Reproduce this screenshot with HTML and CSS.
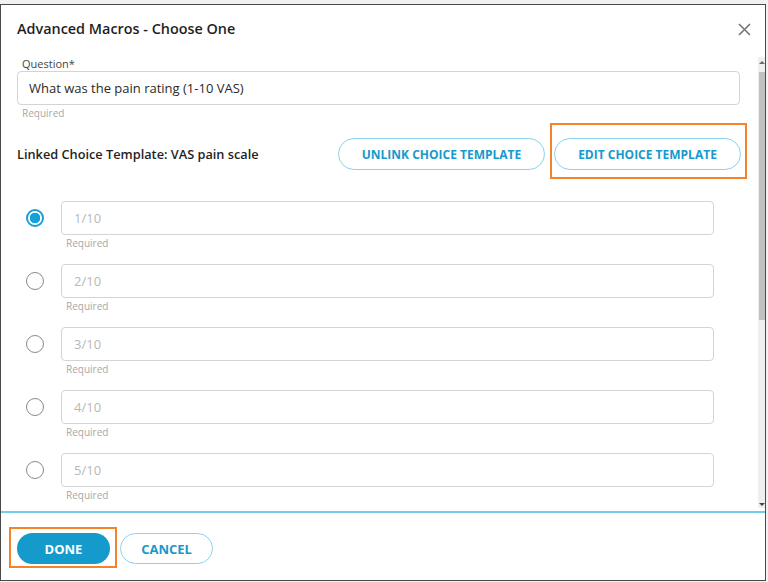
FILE: index.html
```html
<!DOCTYPE html>
<html lang="en">
<head>
<meta charset="utf-8">
<title>Advanced Macros - Choose One</title>
<link rel="stylesheet" href="styles.css">
</head>
<body>
<div class="dialog">
  <div class="header">
    <h1 class="title">Advanced Macros - Choose One</h1>
    <button class="close" aria-label="Close">
      <svg width="13" height="13" viewBox="0 0 13 13"><path d="M1 1 L12 12 M12 1 L1 12" stroke="#757575" stroke-width="1.6" fill="none"/></svg>
    </button>
  </div>
  <div class="main">
    <div class="content">
      <div class="field">
        <label class="label">Question*</label>
        <div class="input question">What was the pain rating (1-10 VAS)</div>
        <div class="hint">Required</div>
      </div>
      <div class="linked-row">
        <div class="linked-text">Linked Choice Template: VAS pain scale</div>
        <div class="btn-group">
          <button class="btn btn-outline btn-unlink">UNLINK CHOICE TEMPLATE</button>
          <div class="highlight highlight-edit">
            <button class="btn btn-outline btn-edit">EDIT CHOICE TEMPLATE</button>
          </div>
        </div>
      </div>
      <div class="options">
        <div class="option">
          <span class="radio checked"></span>
          <div class="option-field">
            <div class="input placeholder">1/10</div>
            <div class="hint">Required</div>
          </div>
        </div>
        <div class="option">
          <span class="radio"></span>
          <div class="option-field">
            <div class="input placeholder">2/10</div>
            <div class="hint">Required</div>
          </div>
        </div>
        <div class="option">
          <span class="radio"></span>
          <div class="option-field">
            <div class="input placeholder">3/10</div>
            <div class="hint">Required</div>
          </div>
        </div>
        <div class="option">
          <span class="radio"></span>
          <div class="option-field">
            <div class="input placeholder">4/10</div>
            <div class="hint">Required</div>
          </div>
        </div>
        <div class="option">
          <span class="radio"></span>
          <div class="option-field">
            <div class="input placeholder">5/10</div>
            <div class="hint">Required</div>
          </div>
        </div>
        <div class="option">
          <span class="radio"></span>
          <div class="option-field">
            <div class="input placeholder">6/10</div>
            <div class="hint">Required</div>
          </div>
        </div>
      </div>
    </div>
    <div class="scrollbar">
      <span class="arrow-up"></span>
      <span class="thumb"></span>
      <span class="track-fill"></span>
      <span class="arrow-down"></span>
    </div>
  </div>
  <div class="footer">
    <div class="highlight highlight-done">
      <button class="btn btn-primary">DONE</button>
    </div>
    <button class="btn btn-outline btn-cancel">CANCEL</button>
  </div>
</div>
</body>
</html>
```
FILE: styles.css
```css
* { box-sizing: border-box; }
html, body { margin: 0; padding: 0; }
body {
  background: #f1f1f1;
  font-family: "Open Sans", "Noto Sans", "Liberation Sans", sans-serif;
  color: #222;
  height: 582px;
  overflow: hidden;
}
.dialog {
  margin-top: 4px;
  width: 766px;
  height: 577px;
  border: 1px solid #4a4a4a;
  background: #fff;
  display: flex;
  flex-direction: column;
}
.header {
  height: 52px;
  flex: none;
  display: flex;
  align-items: flex-start;
  justify-content: space-between;
  padding: 14px 14px 0 16px;
}
.title {
  margin: 0;
  font-size: 14.4px;
  line-height: 20px;
  font-weight: 600;
  color: #1f1f1f;
}
.close {
  border: 0;
  background: none;
  padding: 0;
  margin-top: 4px;
  width: 13px;
  height: 13px;
  display: block;
}
.close svg { display: block; }
.main {
  flex: 1;
  min-height: 0;
  display: flex;
}
.content {
  flex: 1;
  overflow: hidden;
  padding: 0 18px 0 16px;
}
.label {
  display: block;
  font-size: 11px;
  line-height: 13px;
  margin-bottom: 1px;
  padding-left: 5px;
  color: #444;
}
.input {
  height: 34px;
  border: 1px solid #d4d4d4;
  border-radius: 4px;
  font-size: 13px;
  line-height: 32px;
  padding: 0 11px;
  color: #2a2a2a;
}
.input.placeholder {
  color: #b8b8b8;
}
.hint {
  font-size: 10px;
  line-height: 14px;
  margin-top: 1px;
  padding-left: 5px;
  color: #a8a8a8;
}
.linked-row {
  margin-top: 18px;
  display: flex;
  align-items: center;
  justify-content: space-between;
}
.linked-text {
  font-size: 12.75px;
  font-weight: 600;
  color: #1f1f1f;
}
.btn-group {
  display: flex;
  align-items: center;
  gap: 9px;
  margin-right: -1px;
}
.btn {
  display: block;
  font-family: "Open Sans", "Noto Sans", "Liberation Sans", sans-serif;
  font-size: 12px;
  font-weight: 700;
  border-radius: 17px;
  padding: 0;
  cursor: pointer;
}
.btn-outline {
  background: #fff;
  border: 1.5px solid #8dd3ee;
  color: #1799cb;
}
.btn-unlink { width: 207px; height: 32px; }
.btn-edit { width: 187px; height: 32px; }
.highlight {
  border: 2px solid #f5832b;
}
.highlight-edit {
  padding: 13px 4px 7px 2px;
  margin: -15px -6px -9px -4px;
}
.options {
  margin-top: 31px;
  padding: 0 26px 0 9px;
}
.option {
  display: flex;
  align-items: flex-start;
  gap: 17px;
  margin-bottom: 14px;
}
.radio {
  flex: none;
  width: 18px;
  height: 18px;
  margin-top: 8px;
  border-radius: 50%;
  border: 1.5px solid #8a8a8a;
  background: #fff;
}
.radio.checked {
  border: 2px solid #16a0d8;
  background: radial-gradient(circle, #16a0d8 0 5px, #fff 5.5px);
}
.option-field { flex: 1; }
.option-field .input { padding: 0 12px; line-height: 33px; }
.scrollbar {
  flex: none;
  width: 7px;
  margin-bottom: 3px;
  background: #efefef;
  display: flex;
  flex-direction: column;
  align-items: center;
}
.arrow-up, .arrow-down {
  width: 0;
  height: 0;
  border-left: 3px solid transparent;
  border-right: 3px solid transparent;
  flex: none;
}
.arrow-up { border-bottom: 3px solid #6a6a6a; margin-top: 4px; }
.arrow-down { border-top: 3px solid #444; margin-bottom: 2px; }
.thumb {
  width: 6px;
  height: 248px;
  margin-top: 8px;
  background: #c1c1c1;
  flex: none;
}
.track-fill { flex: 1; }
.footer {
  flex: none;
  height: 69px;
  border-top: 2px solid #72cdec;
  padding: 20px 0 0 16px;
  display: flex;
  align-items: flex-start;
  gap: 10px;
}
.highlight-done {
  padding: 4px 5px 2px 6px;
  margin: -6px -7px -4px -8px;
}
.btn-primary {
  width: 93px;
  height: 31px;
  background: #149bcc;
  border: 0;
  color: #fff;
  font-size: 13px;
}
.btn-cancel {
  width: 93px;
  height: 31px;
  font-size: 13px;
}
```
